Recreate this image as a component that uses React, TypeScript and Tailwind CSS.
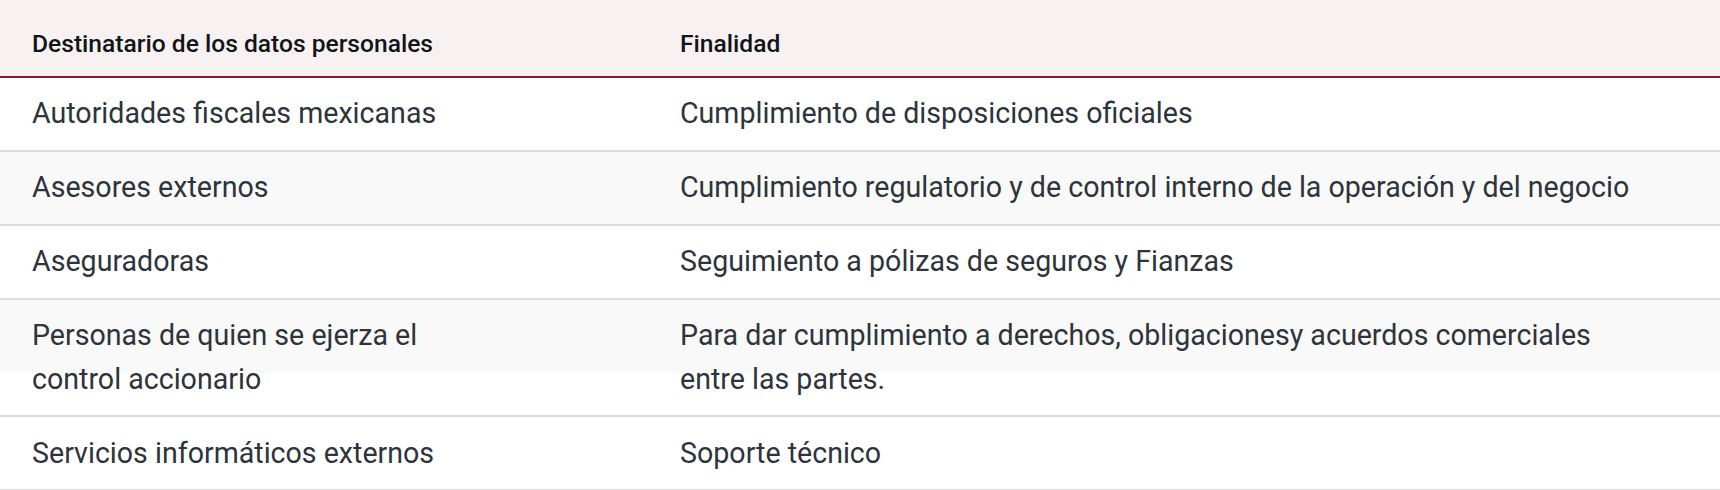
import React from "react";

const rows: [string, string][] = [
  ["Autoridades fiscales mexicanas", "Cumplimiento de disposiciones oficiales"],
  ["Asesores externos", "Cumplimiento regulatorio y de control interno de la operación y del negocio"],
  ["Aseguradoras", "Seguimiento a pólizas de seguros y Fianzas"],
  ["Personas de quien se ejerza el control accionario", "Para dar cumplimiento a derechos, obligacionesy acuerdos comerciales entre las partes."],
  ["Servicios informáticos externos", "Soporte técnico"],
];

export default function App() {
  return (
    <div className="w-[1720px] bg-white" style={{ fontFamily: "Roboto, 'Liberation Sans', sans-serif" }}>
      <table className="w-full table-fixed border-collapse">
        <colgroup>
          <col className="w-[648px]" />
          <col />
        </colgroup>
        <thead>
          <tr className="bg-[#f8f1f1] border-b-2 border-[#8b1a2a]">
            <th className="pl-[32px] pr-[32px] pt-[26px] pb-[14px] text-left text-[24.6px] leading-[36px] font-medium text-[#111518]">
              Destinatario de los datos personales
            </th>
            <th className="pl-[32px] pr-[32px] pt-[26px] pb-[14px] text-left text-[24.6px] leading-[36px] font-medium text-[#111518]">
              Finalidad
            </th>
          </tr>
        </thead>
        <tbody>
          {rows.map(([a, b], i) => (
            <tr
              key={i}
              className={
                i % 2 === 1
                  ? "border-b-2 border-[#dcdcdc] bg-[linear-gradient(#f9f9f9,#f9f9f9)] bg-no-repeat bg-[length:100%_74px]"
                  : "border-b-2 border-[#dcdcdc] bg-white"
              }
            >
              <td className="pl-[32px] pr-[170px] py-[14.4px] align-top text-[28.6px] leading-[43.2px] text-[#2d343b]">
                {a}
              </td>
              <td className="pl-[32px] pr-[72px] py-[14.4px] align-top text-[28.6px] leading-[43.2px] text-[#2d343b]">
                {b}
              </td>
            </tr>
          ))}
        </tbody>
      </table>
    </div>
  );
}
